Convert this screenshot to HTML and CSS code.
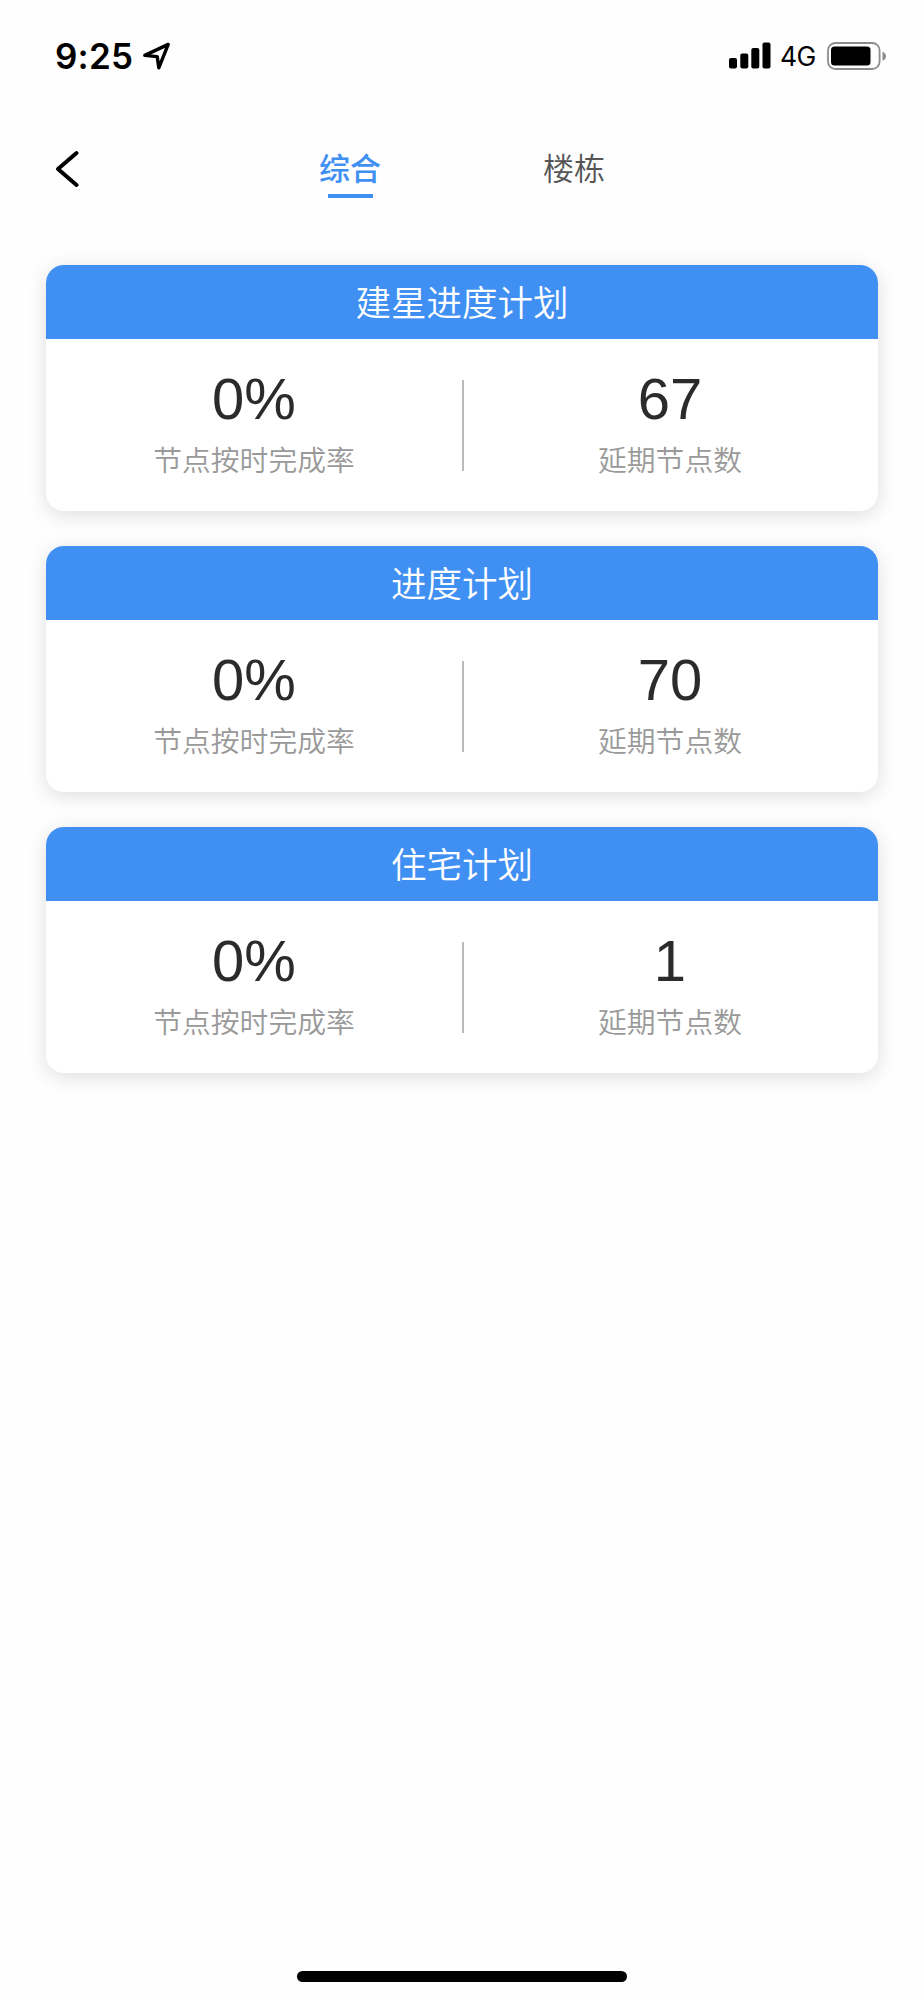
FILE: index.html
```
<!DOCTYPE html>
<html lang="zh-CN">
<head>
    <meta charset="UTF-8">
    <meta name="viewport" content="width=device-width, initial-scale=1.0">
    <title>进度计划</title>

    <link rel="stylesheet" href="styles.css">

</head>
<body>
    <div class="status">
        <span class="time">9:25</span>
        <svg class="local" width="30" height="30" viewBox="0 0 30 30">
            <path d="M2.8 14.4 L26.2 3.4 L16.8 26.8 L15.2 15.6 Z" fill="none" stroke="#000" stroke-width="3.4" stroke-linejoin="round"/>
        </svg>
        <svg class="sinal" width="42" height="27" viewBox="0 0 42 27">
            <rect x="0" y="16" width="8" height="10.4" rx="2"/>
            <rect x="11.3" y="11.5" width="8" height="14.9" rx="2"/>
            <rect x="22.3" y="6" width="8" height="20.4" rx="2"/>
            <rect x="33.5" y="0.4" width="8" height="26" rx="2"/>
        </svg>
        <span class="rede">4G</span>
        <svg class="bateria" width="60" height="28" viewBox="0 0 60 28">
            <rect x="1" y="1" width="51.6" height="26" rx="7.5" fill="none" stroke="#8c8c8c" stroke-width="1.8"/>
            <rect x="4" y="4.6" width="39.5" height="19" rx="3.5"/>
            <path d="M55.5 9.8 Q59 11 59 14.2 Q59 17.4 55.5 18.6 Z" fill="#8c8c8c"/>
        </svg>
    </div>

    <div class="topo">
        <button class="voltar">
            <svg width="24" height="38" viewBox="0 0 24 38">
                <path d="M21.5 3 L3 19 L21.5 35" fill="none" stroke="#000" stroke-width="4" stroke-linecap="round" stroke-linejoin="round"/>
            </svg>
        </button>
        <div class="abas">
            <div class="aba ativa">综合</div>
            <div class="aba">楼栋</div>
        </div>
    </div>

    <div class="lista">
        <div class="cartao">
            <div class="titulo">建星进度计划</div>
            <div class="dados">
                <div class="item">
                    <div class="numero">0%</div>
                    <div class="nome">节点按时完成率</div>
                </div>
                <div class="linha"></div>
                <div class="item">
                    <div class="numero">67</div>
                    <div class="nome">延期节点数</div>
                </div>
            </div>
        </div>
        <div class="cartao">
            <div class="titulo">进度计划</div>
            <div class="dados">
                <div class="item">
                    <div class="numero">0%</div>
                    <div class="nome">节点按时完成率</div>
                </div>
                <div class="linha"></div>
                <div class="item">
                    <div class="numero">70</div>
                    <div class="nome">延期节点数</div>
                </div>
            </div>
        </div>
        <div class="cartao">
            <div class="titulo">住宅计划</div>
            <div class="dados">
                <div class="item">
                    <div class="numero">0%</div>
                    <div class="nome">节点按时完成率</div>
                </div>
                <div class="linha"></div>
                <div class="item">
                    <div class="numero">1</div>
                    <div class="nome">延期节点数</div>
                </div>
            </div>
        </div>
    </div>

    <div class="barra"></div>
</body>
</html>
```
FILE: styles.css
```
*{
    margin: 0;
    padding: 0;
    box-sizing: border-box;
}
body{
    background-color: #fefefe;
    height: 2000px;
    display: flex;
    flex-direction: column;
    font-family: "Noto Sans CJK SC", sans-serif;
}
.status{
    height: 111px;
    padding: 0 37px 0 55px;
    display: flex;
    align-items: center;
    font-family: Inter, sans-serif;
}
.time{
    font-size: 35px;
    font-weight: 600;
    line-height: 40px;
    letter-spacing: 0.2px;
}
.local{margin-left: 9px;}
.sinal{margin-left: auto;}
.rede{
    width: 37px;
    margin: 1px 10px 0 9px;
    font-size: 26.5px;
    line-height: 32px;
    letter-spacing: -0.5px;
}
.topo{
    height: 153.5px;
    padding: 35px 0 0 55px;
    display: flex;
    align-items: flex-start;
}
.voltar{
    background-color: transparent;
    border: none;
    width: 24px;
    height: 46px;
    display: flex;
    align-items: center;
}
.abas{
    display: flex;
    gap: 162px;
    margin-left: 240px;
}
.aba{
    width: 62px;
    font-size: 31px;
    font-weight: 350;
    line-height: 42px;
    white-space: nowrap;
    color: #555;
}
.ativa{
    color: #4090f3;
    font-weight: 500;
}
.ativa::after{
    content: "";
    display: block;
    width: 45px;
    height: 4px;
    margin: 6px auto 0;
    background-color: #4090f3;
}
.lista{
    padding: 0 46px;
    display: flex;
    flex-direction: column;
    gap: 35px;
}
.cartao{
    height: 246px;
    border-radius: 18px;
    background-color: white;
    box-shadow: 0 4px 20px rgba(0, 0, 0, .13);
    overflow: hidden;
}
.titulo{
    height: 74.5px;
    line-height: 72px;
    background-color: #4090f3;
    color: white;
    font-size: 35.5px;
    font-weight: 350;
    text-align: center;
}
.dados{
    display: flex;
    align-items: flex-start;
    padding: 27.5px 2px 0 0;
}
.item{
    flex: 1;
    text-align: center;
}
.item:first-child{
    flex: none;
    width: 416px;
}
.numero{
    font-family: "Liberation Sans", sans-serif;
    font-size: 58px;
    line-height: 64px;
    color: #2b2b2b;
}
.nome{
    font-size: 28.8px;
    font-weight: 350;
    line-height: 40px;
    margin-top: 8px;
    color: #999;
}
.linha{
    width: 2px;
    height: 91px;
    margin-top: 13px;
    background-color: #bbb;
}
.barra{
    width: 330px;
    height: 11px;
    border-radius: 6px;
    background-color: black;
    margin: auto auto 18px;
}
```
